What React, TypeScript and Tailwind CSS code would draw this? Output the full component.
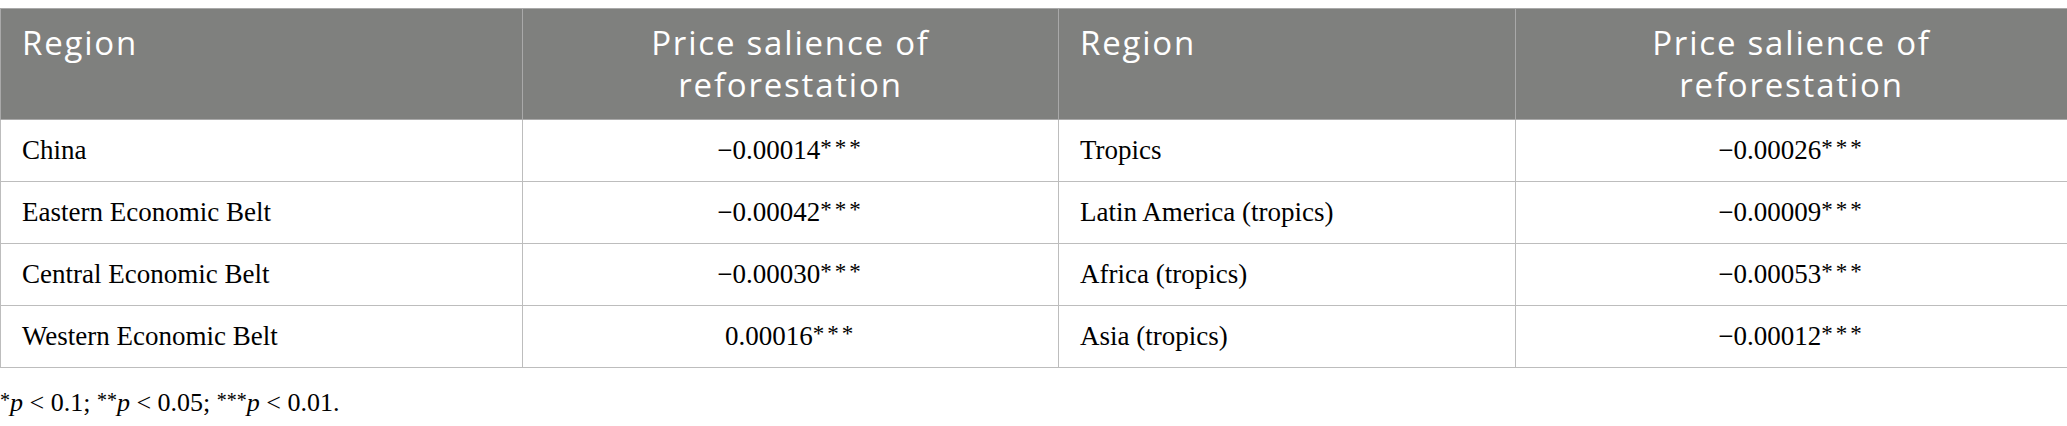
import React from "react"

const rows = [
  ["China", "\u22120.00014", "Tropics", "\u22120.00026"],
  ["Eastern Economic Belt", "\u22120.00042", "Latin America (tropics)", "\u22120.00009"],
  ["Central Economic Belt", "\u22120.00030", "Africa (tropics)", "\u22120.00053"],
  ["Western Economic Belt", "0.00016", "Asia (tropics)", "\u22120.00012"],
]

function Stars() {
  return <span className="text-[23px] tracking-[3px] align-[4px]">***</span>
}

export default function App() {
  return (
    <div className="w-[2067px] h-[426px] bg-white pt-2">
      <table className="w-[2067px] table-fixed border-collapse">
        <colgroup>
          <col className="w-[522px]" />
          <col className="w-[536px]" />
          <col className="w-[457px]" />
          <col className="w-[552px]" />
        </colgroup>
        <thead>
          <tr className="bg-[#7f807e] text-white text-[33px] tracking-[1.8px] leading-[42px] font-['Open_Sans',sans-serif]">
            <th className="h-[111px] border border-[#a9a9a9] px-[21px] pt-[13px] pb-3 text-left align-top font-normal">Region</th>
            <th className="border border-[#a9a9a9] px-[21px] pt-[13px] pb-3 text-center align-top font-normal">
              Price salience of
              <br />
              reforestation
            </th>
            <th className="border border-[#a9a9a9] px-[21px] pt-[13px] pb-3 text-left align-top font-normal">Region</th>
            <th className="border border-[#a9a9a9] px-[21px] pt-[13px] pb-3 text-center align-top font-normal">
              Price salience of
              <br />
              reforestation
            </th>
          </tr>
        </thead>
        <tbody className="text-[27px] text-black font-['Liberation_Serif',serif]">
          {rows.map((r) => (
            <tr key={r[0]}>
              <td className="h-[62px] border border-[#bdbdbd] px-[21px] align-middle">{r[0]}</td>
              <td className="border border-[#bdbdbd] px-[21px] text-center align-middle">
                {r[1]}
                <Stars />
              </td>
              <td className="border border-[#bdbdbd] px-[21px] align-middle">{r[2]}</td>
              <td className="border border-[#bdbdbd] px-[21px] text-center align-middle">
                {r[3]}
                <Stars />
              </td>
            </tr>
          ))}
        </tbody>
      </table>
      <p className="mt-[15px] text-[26px] text-black font-['Liberation_Serif',serif]">
        <span className="text-[20px] align-[4px]">*</span>
        <i>p</i> &lt; 0.1; <span className="text-[20px] align-[4px]">**</span>
        <i>p</i> &lt; 0.05; <span className="text-[20px] align-[4px]">***</span>
        <i>p</i> &lt; 0.01.
      </p>
    </div>
  )
}
